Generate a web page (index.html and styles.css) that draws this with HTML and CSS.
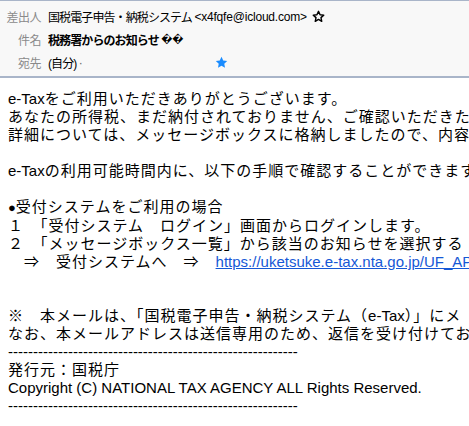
FILE: index.html
```html
<!DOCTYPE html>
<html>
<head>
    <meta charset="utf-8">
    <title>税務署からのお知らせ</title>
    <link rel="stylesheet" href="styles.css">
</head>
<body>

    <div class="cabecera">
        <span class="etiqueta">差出人</span>
        <span class="valor">国税電子申告・納税システム <span class="correo">&lt;x4fqfe@icloud.com&gt;</span><svg class="estrella" width="13" height="13" viewBox="0 0 24 24"><path d="M12 2.5l2.9 6.3 6.8.7-5.1 4.6 1.4 6.8L12 17.4l-6 3.5 1.4-6.8-5.1-4.6 6.8-.7z" fill="none" stroke="#000" stroke-width="2.6" stroke-linejoin="round"/></svg></span>

        <span class="etiqueta">件名</span>
        <span class="valor asunto">税務署からのお知らせ <span class="raro">��</span></span>

        <span class="etiqueta">宛先</span>
        <span class="valor">(自分) <span class="punto">·</span><svg class="estrella-azul" width="13" height="13" viewBox="0 0 24 24"><path d="M12 1.5l3.2 6.8 7.3.9-5.4 5 1.4 7.3L12 17.9l-6.5 3.6 1.4-7.3-5.4-5 7.3-.9z" fill="#1a8cff"/></svg></span>
    </div>

    <div class="cuerpo"><span class="en">e-Tax</span>をご利用いただきありがとうございます。
あなたの所得税、まだ納付されておりません、ご確認いただきた
詳細については、メッセージボックスに格納しましたので、内容
<br><span class="en">e-Tax</span>の利用可能時間内に、以下の手順で確認することができます
<br><span class="en bala">●</span>受付システムをご利用の場合
１　「受付システム　ログイン」画面からログインします。
２　「メッセージボックス一覧」から該当のお知らせを選択する
　⇒　受付システムへ　⇒　<a class="en enlace" href="#">https://uketsuke.e-tax.nta.go.jp/UF_AP</a>
<br><br>※　本メールは、「国税電子申告・納税システム（<span class="en">e-Tax</span>）」にメ
なお、本メールアドレスは送信専用のため、返信を受け付けてお
<span class="en">----------------------------------------------------------</span>
発行元：国税庁
<span class="en">Copyright (C) NATIONAL TAX AGENCY ALL Rights Reserved.</span>
<span class="en">----------------------------------------------------------</span></div>

</body>
</html>
```

FILE: styles.css
```css
body {
    margin: 0;
    background-color: #fff;
    color: #000;
    overflow: hidden;
    font-family: 'Liberation Sans', 'Noto Sans CJK JP', sans-serif;
}

.cabecera {
    display: grid;
    grid-template-columns: 41px auto;
    column-gap: 7px;
    grid-auto-rows: 23px;
    align-items: center;
    padding: 4px 0 2px;
    background-color: #f8f8f8;
    border-top: 1px solid #a9b5c9;
    border-bottom: 2px solid #a9b5c9;
    font-size: 12px;
}

.etiqueta {
    text-align: right;
    color: #8a8a8a;
    letter-spacing: -0.5px;
}

.valor {
    display: flex;
    align-items: center;
    letter-spacing: -0.9px;
    white-space: pre;
}

.correo {
    letter-spacing: -0.2px;
    font-size: 12px;
}

.asunto {
    font-weight: bold;
}

.raro {
    font-family: 'DejaVu Sans', sans-serif;
    font-size: 10px;
    letter-spacing: 0;
}

.punto {
    color: #666;
}

.estrella {
    margin-left: 5px;
}

.estrella-azul {
    margin-left: 133px;
}

.cuerpo {
    padding: 12px 8px 0;
    white-space: pre;
    overflow: hidden;
    font-size: 15px;
    line-height: 18px;
    letter-spacing: 1px;
}

.en {
    letter-spacing: 0;
}

.bala {
    font-size: 13px;
}

.enlace {
    color: #1558d6;
    text-decoration: underline;
}
```
